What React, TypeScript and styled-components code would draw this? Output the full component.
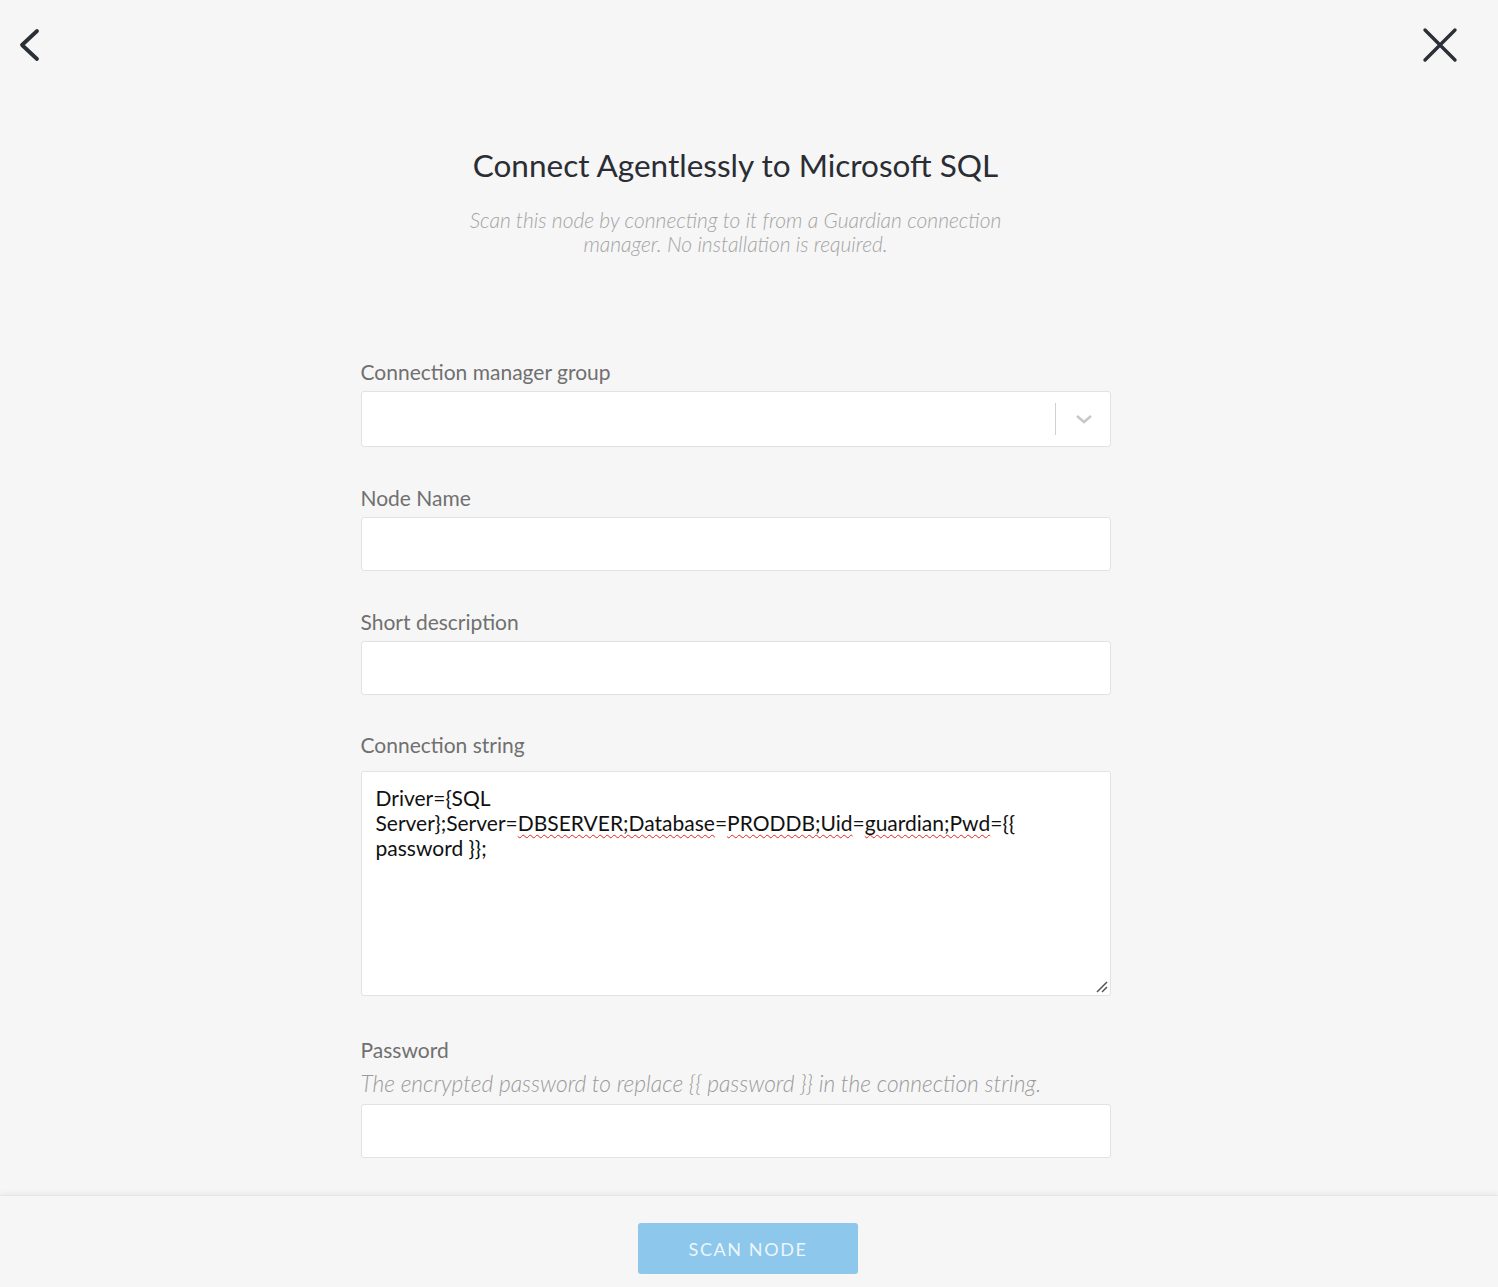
import React from 'react';
import styled, { createGlobalStyle } from 'styled-components';

const GlobalStyle = createGlobalStyle`
  html, body {
    margin: 0;
    padding: 0;
    background: #f6f6f6;
    font-family: Lato, "Open Sans", sans-serif;
  }
  * {
    box-sizing: border-box;
  }
`;

const Page = styled.div`
  display: flex;
  flex-direction: column;
  height: 100vh;
  background: #f6f6f6;
`;

const Main = styled.div`
  flex: 1;
  overflow: hidden;
  position: relative;
`;

const TopBar = styled.div`
  display: flex;
  justify-content: space-between;
  align-items: center;
  padding: 26px 38px 0 10px;
  height: 64px;
`;

const IconButton = styled.button`
  background: none;
  border: 0;
  padding: 0;
  width: 40px;
  height: 40px;
  display: flex;
  align-items: center;
  justify-content: center;
  cursor: pointer;
  color: #2b2f36;
`;

const Content = styled.div`
  display: flex;
  flex-direction: column;
  align-items: center;
  padding-right: 27px;
`;

const Title = styled.h1`
  margin: 82px 0 0;
  font-size: 31.5px;
  line-height: 38px;
  font-weight: 400;
  color: #2a2d33;
`;

const Subtitle = styled.p`
  margin: 24px 0 0;
  max-width: 560px;
  text-align: center;
  font-size: 21px;
  line-height: 24px;
  font-style: italic;
  font-weight: 300;
  color: #a4a4a4;
`;

const Form = styled.div`
  width: 750px;
  margin-top: 104px;
  display: flex;
  flex-direction: column;
  gap: 39px;
`;

const Field = styled.div<{ $offset?: number }>`
  display: flex;
  flex-direction: column;
  margin-top: ${(p) => p.$offset ?? 0}px;
`;

const Label = styled.label<{ $space?: number }>`
  font-size: 21px;
  line-height: 24px;
  color: #707070;
  margin-bottom: ${(p) => p.$space ?? 7}px;
`;

const Help = styled.div`
  font-size: 22.8px;
  line-height: 28px;
  font-style: italic;
  font-weight: 300;
  color: #9a9a9a;
  margin: 7px 0 7px;
`;

const Input = styled.div<{ $h?: number }>`
  height: ${(p) => p.$h ?? 54}px;
  background: #fff;
  border: 1px solid #e2e2e2;
  border-radius: 3px;
`;

const SelectBox = styled(Input)`
  display: flex;
  align-items: center;
  justify-content: flex-end;
  padding-right: 17px;
`;

const Separator = styled.span`
  width: 1px;
  height: 32px;
  background: #d0d0d0;
  margin-right: 19px;
`;

const TextArea = styled.div`
  position: relative;
  height: 225px;
  background: #fff;
  border: 1px solid #e2e2e2;
  border-radius: 3px;
  padding: 13px 14px;
  font-size: 21px;
  line-height: 25px;
  color: #111;
`;

const Misspelled = styled.span`
  text-decoration: underline wavy #e3261c;
  text-decoration-thickness: 1.2px;
  text-underline-offset: 3px;
  text-decoration-skip-ink: none;
`;

const Grip = styled.svg`
  position: absolute;
  right: 1px;
  bottom: 1px;
`;

const Footer = styled.div`
  height: 92px;
  flex-shrink: 0;
  border-top: 1px solid #e6e6e6;
  box-shadow: 0 -2px 5px rgba(0, 0, 0, 0.05);
  background: #f6f6f6;
  display: flex;
  justify-content: center;
  padding: 27px 2px 0 0;
  position: relative;
`;

const PrimaryButton = styled.button`
  width: 220px;
  height: 51px;
  border: 0;
  border-radius: 3px;
  background: #8dc8ec;
  color: rgba(255, 255, 255, 0.85);
  font-family: Lato, sans-serif;
  font-size: 18px;
  letter-spacing: 1.6px;
  cursor: not-allowed;
`;

const App: React.FC = () => (
  <>
    <GlobalStyle />
    <Page>
      <Main>
        <TopBar>
          <IconButton aria-label="Back">
            <svg width="28" height="40" viewBox="0 0 28 40">
              <polyline
                points="21,6 6,20 21,34"
                fill="none"
                stroke="currentColor"
                strokeWidth="3.8"
                strokeLinecap="round"
                strokeLinejoin="round"
              />
            </svg>
          </IconButton>
          <IconButton aria-label="Close">
            <svg width="40" height="40" viewBox="0 0 40 40">
              <path
                d="M5 5 L35 35 M35 5 L5 35"
                fill="none"
                stroke="currentColor"
                strokeWidth="3.4"
                strokeLinecap="round"
              />
            </svg>
          </IconButton>
        </TopBar>
        <Content>
          <Title>Connect Agentlessly to Microsoft SQL</Title>
          <Subtitle>
            Scan this node by connecting to it from a Guardian connection manager. No
            installation is required.
          </Subtitle>
          <Form>
            <Field>
              <Label>Connection manager group</Label>
              <SelectBox $h={56}>
                <Separator />
                <svg width="18" height="12" viewBox="0 0 18 12">
                  <polyline
                    points="2,3 9,9 16,3"
                    fill="none"
                    stroke="#c8c8c8"
                    strokeWidth="2.6"
                  />
                </svg>
              </SelectBox>
            </Field>
            <Field>
              <Label>Node Name</Label>
              <Input />
            </Field>
            <Field>
              <Label>Short description</Label>
              <Input />
            </Field>
            <Field $offset={-1}>
              <Label $space={14}>Connection string</Label>
              <TextArea>
                Driver={'{'}SQL
                <br />
                Server{'}'};Server=<Misspelled>DBSERVER;Database</Misspelled>=
                <Misspelled>PRODDB;Uid</Misspelled>=<Misspelled>guardian;Pwd</Misspelled>
                ={'{{'}
                <br />
                password {'}}'};
                <Grip width="14" height="14" viewBox="0 0 14 14">
                  <path d="M12 2 L2 12 M12 7 L7 12" stroke="#555" strokeWidth="1.5" />
                </Grip>
              </TextArea>
            </Field>
            <Field $offset={3}>
              <Label $space={0}>Password</Label>
              <Help>The encrypted password to replace {'{{'} password {'}}'} in the connection string.</Help>
              <Input />
            </Field>
          </Form>
        </Content>
      </Main>
      <Footer>
        <PrimaryButton disabled>SCAN NODE</PrimaryButton>
      </Footer>
    </Page>
  </>
);

export default App;
